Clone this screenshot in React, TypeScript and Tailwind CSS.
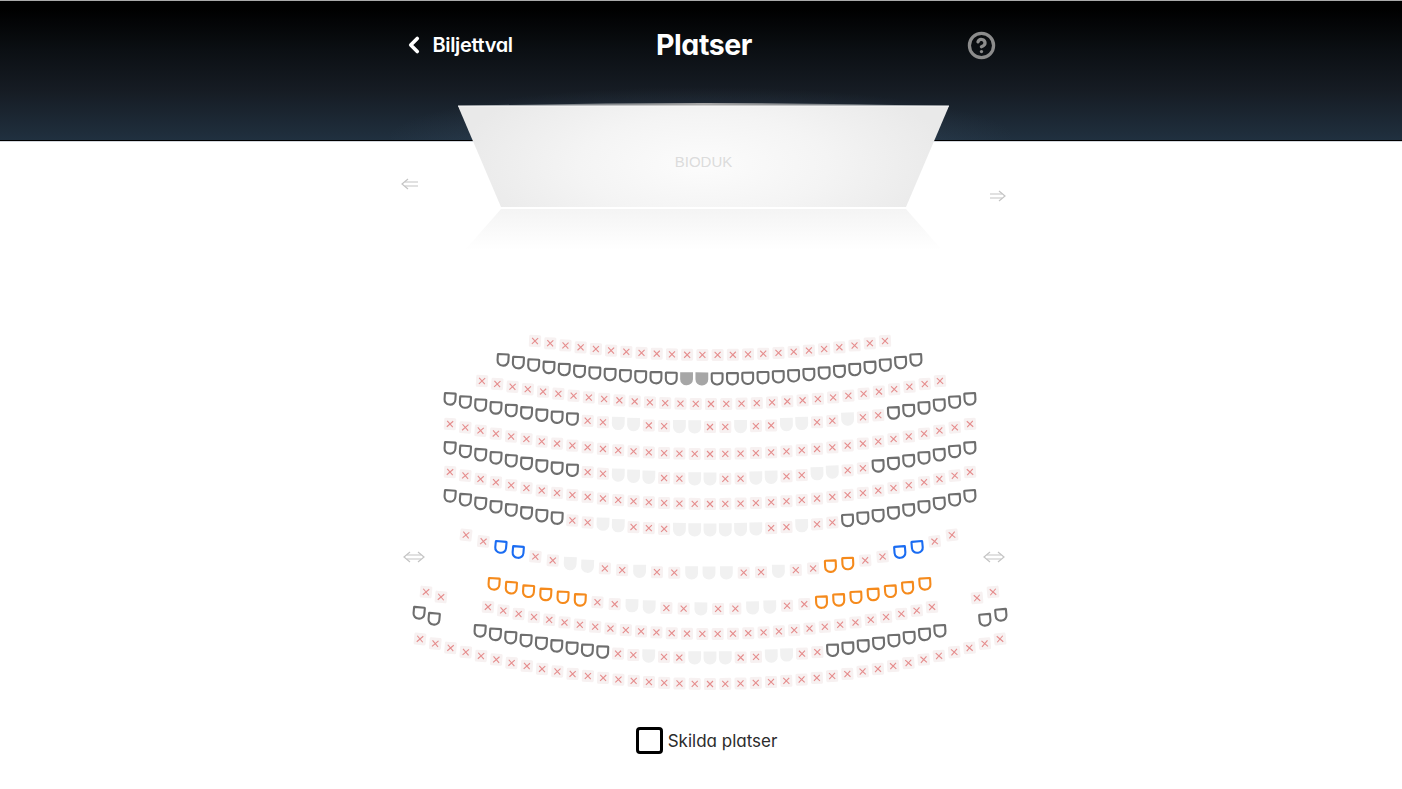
import React from "react";
import { ChevronLeft, CircleHelp } from "lucide-react";

type Row = { x0: number; x1: number; end: number; mid: number; seats: string; pow?: number };

// g taken-free outline, x booked, b blocked, f selected, o orange, l blue
const rows: Row[] = [
  { x0: 535, x1: 885, end: 341, mid: 355, seats: "xxxxxxxxxxxxxxxxxxxxxxxx" },
  { x0: 503, x1: 916, end: 360, mid: 379, seats: "gggggggggggg ff gggggggggggggg" },
  { x0: 482, x1: 940, end: 381, mid: 404, seats: "xxxxxxxxxxxxxxxxxxxxxxxxxxxxxxx" },
  { x0: 450, x1: 970, end: 399, mid: 427, seats: "ggggggggg xx bb xx bb xx b xx bb xx b xx gggggg" },
  { x0: 450, x1: 970, end: 424, mid: 454, seats: "xxxxxxxxxxxxxxxxxxxxxxxxxxxxxxxxxxx" },
  { x0: 450, x1: 970, end: 448, mid: 479, seats: "ggggggggg xx bbb xx bb xx bb xx bb xx ggggggg" },
  { x0: 450, x1: 970, end: 472, mid: 504, seats: "xxxxxxxxxxxxxxxxxxxxxxxxxxxxxxxxxxx" },
  { x0: 450, x1: 970, end: 496, mid: 530, seats: "gggggggg xx bb xxx bbbbbb xx b xx ggggggggg" },
  { x0: 466, x1: 952, end: 535, mid: 573, pow: 2.5, seats: "xx ll xx bb xx b xx bbb xx b xx oo xx ll xx" },
  { x0: 494, x1: 925, end: 584, mid: 609, seats: "oooooo xx bb xx b xx bb xx ooooooo" },
  { x0: 488, x1: 932, end: 607, mid: 634, seats: "xxxxxxxxxxxxxxxxxxxxxxxxxxxxxx" },
  { x0: 480, x1: 940, end: 631, mid: 658, seats: "ggggggggg xx b xx bbb xx bb xx gggggggg" },
  { x0: 420, x1: 1000, end: 639, mid: 684, seats: "xxxxxxxxxxxxxxxxxxxxxxxxxxxxxxxxxxxxxxx" },
];

// little side blocks next to the lower rows
const looseSeats = [
  { x: 426, y: 592, a: 5, t: "x" },
  { x: 441, y: 597, a: 5, t: "x" },
  { x: 977, y: 598, a: -5, t: "x" },
  { x: 993, y: 592, a: -5, t: "x" },
  { x: 419, y: 613, a: 5, t: "g" },
  { x: 434, y: 619, a: 5, t: "g" },
  { x: 985, y: 620, a: -5, t: "g" },
  { x: 1001, y: 615, a: -5, t: "g" },
];

const CUP = "M-4.9 -5.7 H4.9 Q5.4 -5.7 5.4 -5.2 V0.6 A5 5 0 0 1 0.4 5.6 H-0.4 A5 5 0 0 1 -5.4 0.6 V-5.2 Q-5.4 -5.7 -4.9 -5.7 Z";
const CUP_SOLID = "M-6.4 -6.6 H6.4 V0.4 A6.2 6.2 0 0 1 0.2 6.6 H-0.2 A6.2 6.2 0 0 1 -6.4 0.4 Z";

const Seat = ({ x, y, a, t }: { x: number; y: number; a: number; t: string }) => {
  let body: React.ReactNode = null;
  if (t === "x") {
    body = (
      <>
        <rect x={-6} y={-6} width={12} height={12} rx={1.5} fill="#f7f1f1" />
        <path d="M-3 -3 L3 3 M3 -3 L-3 3" stroke="#e58c8c" strokeWidth={1.1} />
      </>
    );
  } else if (t === "b") {
    body = <path d={CUP_SOLID} fill="#f1f1f1" />;
  } else if (t === "f") {
    body = <path d={CUP_SOLID} fill="#a6a6a6" />;
  } else {
    const color = t === "o" ? "#f58a1c" : t === "l" ? "#1a6cf2" : "#6e6e6e";
    body = <path d={CUP} fill="none" stroke={color} strokeWidth={2.1} />;
  }
  return <g transform={`translate(${x} ${y}) rotate(${a})`}>{body}</g>;
};

const SeatRow = ({ row }: { row: Row }) => {
  const types = row.seats.replace(/ /g, "").split("");
  const half = (row.x1 - row.x0) / 2;
  const c = (row.x0 + row.x1) / 2;
  const p = row.pow ?? 2;
  const depth = row.mid - row.end;
  return (
    <>
      {types.map((t, i) => {
        const x = row.x0 + (i * (row.x1 - row.x0)) / (types.length - 1);
        const u = (x - c) / half;
        const y = row.mid - depth * Math.pow(Math.abs(u), p);
        const slope = (-Math.sign(u) * depth * p * Math.pow(Math.abs(u), p - 1)) / half;
        // seats only lean a little compared to the arc
        return <Seat key={i} x={x} y={y} a={(Math.atan(slope) * 180 * 0.3) / Math.PI} t={t} />;
      })}
    </>
  );
};

const ArrowHead = ({ x, y, dir }: { x: number; y: number; dir: 1 | -1 }) => (
  <path d={`M${x + dir * 6} ${y - 5} L${x} ${y} L${x + dir * 6} ${y + 5}`} fill="none" stroke="#c4c4c4" strokeWidth={1.2} />
);

const Lines = ({ x1, x2, y }: { x1: number; x2: number; y: number }) => (
  <path d={`M${x1} ${y - 2} H${x2} M${x1} ${y + 2} H${x2}`} stroke="#c4c4c4" strokeWidth={1.2} fill="none" />
);

export default function App() {
  return (
    <div className="flex min-h-[789px] w-[1402px] flex-col overflow-hidden bg-white">
      {/* Dark top bar */}
      <header className="relative flex h-[141px] justify-center border-t border-b border-t-[#a9a9a9] border-b-black bg-[linear-gradient(to_bottom,#000_6%,#0b0f13_35%,#161c24_65%,#20303f_100%)] shadow-[0_1px_0_#d3d7de]">
        <div className="absolute bottom-0 left-1/2 h-[52px] w-[620px] -translate-x-1/2 bg-[radial-gradient(ellipse_at_center_bottom,rgba(96,122,150,0.3),transparent_72%)]" />
        <div className="relative flex h-[88px] w-[597px] items-center justify-between text-white [font-family:Inter,sans-serif] [font-feature-settings:'cv11']">
          <div className="-ml-[2px] flex w-[158px] items-center gap-[6px]">
            <ChevronLeft className="h-[26px] w-[26px]" strokeWidth={3.4} />
            <span className="text-[20px] font-semibold tracking-[-0.35px]">Biljettval</span>
          </div>
          <h1 className="mt-[1px] text-[28.5px] font-bold tracking-[-0.4px]">Platser</h1>
          <div className="flex w-[150px] justify-end pr-[3.5px]">
            <CircleHelp className="h-[29px] w-[29px] text-[#8c8c8c]" strokeWidth={2.7} />
          </div>
        </div>
      </header>

      {/* Screen and seat map */}
      <main className="relative h-[584px]">
        <svg className="absolute top-0 left-0 overflow-visible" width={1402} height={584} viewBox="0 141 1402 584">
          <defs>
            <radialGradient id="screenFill" gradientUnits="userSpaceOnUse" cx={703} cy={165} r={250} gradientTransform="translate(703 165) scale(1 0.4) translate(-703 -165)">
              <stop offset="0" stopColor="#fcfcfc" />
              <stop offset="0.5" stopColor="#f4f4f4" />
              <stop offset="1" stopColor="#e9e9e9" />
            </radialGradient>
            <linearGradient id="reflection" x1="0" y1="0" x2="0" y2="1">
              <stop offset="0" stopColor="#f4f4f4" />
              <stop offset="1" stopColor="#ffffff" />
            </linearGradient>
            <linearGradient id="screenTop" x1="0" y1="0" x2="1" y2="0">
              <stop offset="0" stopColor="#5c6670" />
              <stop offset="0.5" stopColor="#a8a8a8" />
              <stop offset="1" stopColor="#5c6670" />
            </linearGradient>
          </defs>

          <path d="M458 106 Q703 100 949 106 Z" fill="url(#screenTop)" />
          <path d="M458 106 H949 L906 207 H501 Z" fill="url(#screenFill)" />
          <path d="M458 106 H949" stroke="#f7f7f7" strokeWidth={1.2} />
          <path d="M501 209 H906 L942 250 H465 Z" fill="url(#reflection)" />
          <text x={703.5} y={167} textAnchor="middle" fill="#dcdcdc" className="text-[15px] [font-family:'Liberation_Sans',sans-serif]">
            BIODUK
          </text>

          <ArrowHead x={402} y={184} dir={1} />
          <Lines x1={405} x2={418} y={184} />
          <ArrowHead x={1005} y={196} dir={-1} />
          <Lines x1={990} x2={1002} y={196} />

          <ArrowHead x={404} y={557} dir={1} />
          <ArrowHead x={424} y={557} dir={-1} />
          <Lines x1={407} x2={421} y={557} />
          <ArrowHead x={984} y={557} dir={1} />
          <ArrowHead x={1004} y={557} dir={-1} />
          <Lines x1={987} x2={1001} y={557} />

          {rows.map((row, i) => (
            <SeatRow key={i} row={row} />
          ))}
          {looseSeats.map((s, i) => (
            <Seat key={i} {...s} />
          ))}
        </svg>
      </main>

      {/* Separate seats toggle */}
      <label className="mt-[1px] flex items-center justify-center gap-[5px] pl-[11px] text-[#2b2b2b] [font-family:Inter,sans-serif] [font-feature-settings:'cv11']">
        <span className="h-[27px] w-[27px] rounded-[4px] border-[3px] border-black" />
        <span className="mt-[3px] text-[17px]">Skilda platser</span>
      </label>
    </div>
  );
}
